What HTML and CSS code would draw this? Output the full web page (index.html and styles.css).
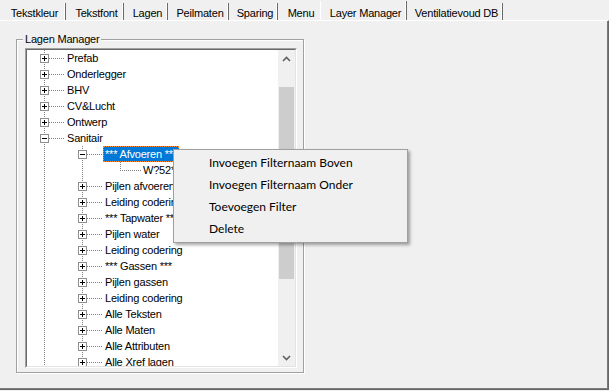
FILE: index.html
```html
<!DOCTYPE html>
<html>
<head>
<meta charset="utf-8">
<link rel="stylesheet" href="styles.css">
</head>
<body>
<div class="tabs">
  <div class="tab">Tekstkleur</div>
  <div class="tab">Tekstfont</div>
  <div class="tab">Lagen</div>
  <div class="tab">Peilmaten</div>
  <div class="tab">Sparing</div>
  <div class="tab tab-presel">Menu</div>
  <div class="tab tab-sel">Layer Manager</div>
  <div class="tab">Ventilatievoud DB</div>
</div>
<div class="page">
  <div class="group">
    <div class="group-title">Lagen Manager</div>
    <div class="tree-outer">
      <div class="tree-inner">
        <div class="tree-list">
          <div class="row"><span class="cell node"><span class="box box-plus"></span></span><span class="label">Prefab</span></div>
          <div class="row"><span class="cell node"><span class="box box-plus"></span></span><span class="label">Onderlegger</span></div>
          <div class="row"><span class="cell node"><span class="box box-plus"></span></span><span class="label">BHV</span></div>
          <div class="row"><span class="cell node"><span class="box box-plus"></span></span><span class="label">CV&amp;Lucht</span></div>
          <div class="row"><span class="cell node"><span class="box box-plus"></span></span><span class="label">Ontwerp</span></div>
          <div class="row"><span class="cell node"><span class="box"></span></span><span class="label">Sanitair</span></div>
          <div class="row"><span class="cell pipe"></span><span class="cell node"><span class="box"></span></span><span class="label sel">*** Afvoeren ***</span></div>
          <div class="row"><span class="cell pipe"></span><span class="cell pipe"></span><span class="cell leaf"></span><span class="label">W?52*</span></div>
          <div class="row"><span class="cell pipe"></span><span class="cell node"><span class="box box-plus"></span></span><span class="label">Pijlen afvoeren</span></div>
          <div class="row"><span class="cell pipe"></span><span class="cell node"><span class="box box-plus"></span></span><span class="label">Leiding codering</span></div>
          <div class="row"><span class="cell pipe"></span><span class="cell node"><span class="box box-plus"></span></span><span class="label">*** Tapwater ***</span></div>
          <div class="row"><span class="cell pipe"></span><span class="cell node"><span class="box box-plus"></span></span><span class="label">Pijlen water</span></div>
          <div class="row"><span class="cell pipe"></span><span class="cell node"><span class="box box-plus"></span></span><span class="label">Leiding codering</span></div>
          <div class="row"><span class="cell pipe"></span><span class="cell node"><span class="box box-plus"></span></span><span class="label">*** Gassen ***</span></div>
          <div class="row"><span class="cell pipe"></span><span class="cell node"><span class="box box-plus"></span></span><span class="label">Pijlen gassen</span></div>
          <div class="row"><span class="cell pipe"></span><span class="cell node"><span class="box box-plus"></span></span><span class="label">Leiding codering</span></div>
          <div class="row"><span class="cell pipe"></span><span class="cell node"><span class="box box-plus"></span></span><span class="label">Alle Teksten</span></div>
          <div class="row"><span class="cell pipe"></span><span class="cell node"><span class="box box-plus"></span></span><span class="label">Alle Maten</span></div>
          <div class="row"><span class="cell pipe"></span><span class="cell node"><span class="box box-plus"></span></span><span class="label">Alle Attributen</span></div>
          <div class="row"><span class="cell pipe"></span><span class="cell node"><span class="box box-plus"></span></span><span class="label">Alle Xref lagen</span></div>
        </div>
        <div class="vscroll">
          <div class="sb-btn"><svg width="9" height="6" viewBox="0 0 9 6"><path d="M1 5L4.5 1.5L8 5" fill="none" stroke="#606060" stroke-width="1.6"/></svg></div>
          <div class="sb-track"><div class="sb-thumb"></div></div>
          <div class="sb-btn"><svg width="9" height="6" viewBox="0 0 9 6"><path d="M1 1L4.5 4.5L8 1" fill="none" stroke="#606060" stroke-width="1.6"/></svg></div>
        </div>
      </div>
    </div>
  </div>
</div>
<div class="menu">
  <div class="menu-item">Invoegen Filternaam Boven</div>
  <div class="menu-item">Invoegen Filternaam Onder</div>
  <div class="menu-item">Toevoegen Filter</div>
  <div class="menu-item">Delete</div>
</div>
</body>
</html>
```
FILE: styles.css
```css
:root {
  --vdots: repeating-linear-gradient(to bottom, #808080 0 1px, transparent 1px 2px);
  --hdots: repeating-linear-gradient(to right, #808080 0 1px, transparent 1px 2px);
}
html, body { margin: 0; padding: 0; }
body {
  width: 609px;
  height: 391px;
  overflow: hidden;
  position: relative;
  background: #f0f0f0;
  font-family: "Liberation Sans", Arial, sans-serif;
  font-size: 11px;
  color: #000;
}

/* tabs */
.tabs { display: flex; height: 20px; }
.tab {
  box-sizing: border-box;
  height: 17px;
  margin-top: 3px;
  padding: 4px 0 0 4px;
  line-height: 13px;
  text-align: center;
  white-space: nowrap;
  letter-spacing: -0.2px;
  border-right: 1px solid #696969;
  box-shadow: inset -1px 0 0 #fff;
}
.tab:nth-child(1) { width: 66px; }
.tab:nth-child(2) { width: 58px; }
.tab:nth-child(3) { width: 44px; }
.tab:nth-child(4) { width: 61px; }
.tab:nth-child(5) { width: 49px; }
.tab:nth-child(6) { width: 42px; }
.tab:nth-child(7) { width: 87px; }
.tab:nth-child(8) { width: 96px; }
.tab-presel { border-right: none; box-shadow: none; }
.tab-sel {
  height: 19px;
  margin-top: 1px;
  padding-top: 6px;
  border-left: 1px solid #fff;
}

/* page */
.page {
  box-sizing: border-box;
  width: 609px;
  height: 370px;
  border-top: 1px solid #fff;
  border-right: 1px solid #696969;
  border-bottom: 1px solid #696969;
  box-shadow: inset -1px -1px 0 #7a7a7a;
  padding: 18px 0 0 16px;
}

/* group box */
.group {
  box-sizing: border-box;
  width: 288px;
  height: 334px;
  border: 1px solid #a0a0a0;
  box-shadow: inset 1px 1px 0 #fff, 1px 1px 0 #fff;
  display: flex;
  flex-direction: column;
  align-items: flex-start;
}
.group-title {
  margin: -7px 0 0 6px;
  padding: 0 2px;
  line-height: 13px;
  background: #f0f0f0;
  letter-spacing: -0.2px;
  white-space: nowrap;
}

/* tree */
.tree-outer {
  margin: 2px 0 0 8px;
  box-sizing: border-box;
  width: 272px;
  height: 320px;
  border: 1px solid;
  border-color: #a0a0a0 #fff #fff #a0a0a0;
}
.tree-inner {
  box-sizing: border-box;
  height: 100%;
  border: 1px solid;
  border-color: #696969 #e3e3e3 #e3e3e3 #696969;
  display: flex;
  background: #fff;
}
.tree-list { flex: 1; overflow: hidden; min-width: 0; }
.row { display: flex; height: 16px; white-space: nowrap; }
.cell {
  flex: none;
  width: 38px;
  height: 16px;
  background-repeat: no-repeat;
}
.pipe {
  background-image: var(--vdots);
  background-position: 17px 0;
  background-size: 1px 16px;
}
.node {
  display: flex;
  align-items: flex-start;
  background-image: var(--vdots), var(--hdots);
  background-position: 17px 0, 22px 8px;
  background-size: 1px 16px, 16px 1px;
}
.leaf {
  background-image: var(--vdots), var(--hdots);
  background-position: 17px 0, 17px 8px;
  background-size: 1px 9px, 21px 1px;
}
.box {
  box-sizing: border-box;
  width: 9px;
  height: 9px;
  margin: 4px 0 0 13px;
  border: 1px solid #8e8e8e;
  background-color: #fff;
  background-image: linear-gradient(#000, #000);
  background-repeat: no-repeat;
  background-size: 5px 1px;
  background-position: 1px 3px;
}
.box-plus {
  background-image: linear-gradient(#000, #000), linear-gradient(#000, #000);
  background-size: 5px 1px, 1px 5px;
  background-position: 1px 3px, 3px 1px;
}
.label {
  padding: 0 2px;
  line-height: 16px;
  letter-spacing: -0.2px;
}
.label.sel {
  background: #0078d7;
  color: #fff;
  outline: 1px dotted #ff8c2a;
  outline-offset: -1px;
}

/* scrollbar */
.vscroll {
  flex: none;
  width: 17px;
  display: flex;
  flex-direction: column;
  background: #f0f0f0;
}
.sb-btn {
  height: 17px;
  flex: none;
  display: flex;
  align-items: center;
  justify-content: center;
}
.sb-btn svg { display: block; }
.sb-track { flex: 1; padding: 20px 1px 0; }
.sb-thumb { height: 192px; background: #cdcdcd; }

/* context menu */
.menu {
  position: absolute;
  left: 173px;
  top: 149px;
  width: 235px;
  box-sizing: border-box;
  padding: 2px;
  background: #f0f0f0;
  border: 1px solid #a0a0a0;
  box-shadow: 2px 2px 3px rgba(0, 0, 0, 0.35);
  font-family: Lato, "Noto Sans", sans-serif;
  font-size: 12px;
  color: #000;
}
.menu-item {
  height: 22px;
  line-height: 22px;
  padding-left: 33px;
  white-space: nowrap;
}
```
